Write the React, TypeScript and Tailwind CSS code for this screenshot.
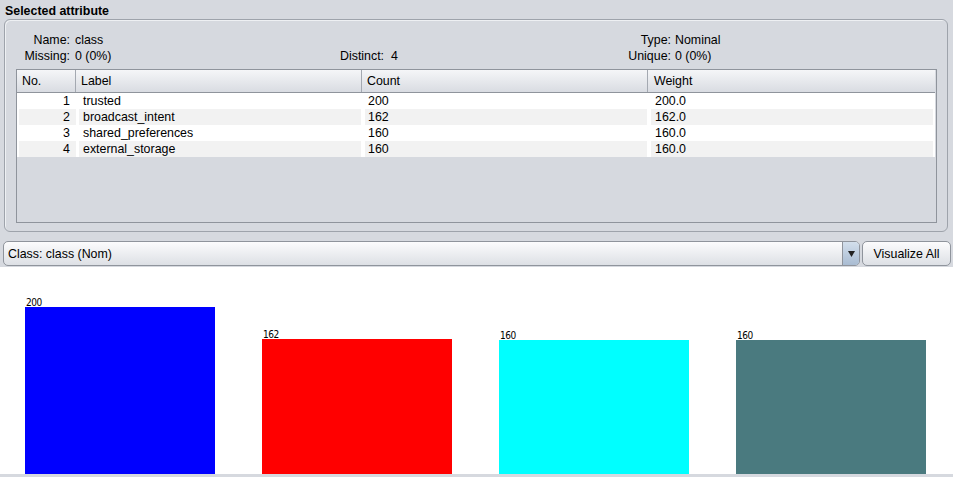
import React from "react";

const rows = [
  { no: 1, label: "trusted", count: "200", weight: "200.0" },
  { no: 2, label: "broadcast_intent", count: "162", weight: "162.0" },
  { no: 3, label: "shared_preferences", count: "160", weight: "160.0" },
  { no: 4, label: "external_storage", count: "160", weight: "160.0" },
];

const bars = [
  { value: 200, color: "bg-[#0000ff]" },
  { value: 162, color: "bg-[#ff0000]" },
  { value: 160, color: "bg-[#00ffff]" },
  { value: 160, color: "bg-[#4a7a7f]" },
];

export default function App() {
  return (
    <div className="w-[953px] h-[477px] overflow-hidden bg-[#d6d9df] text-[12.4px] leading-[16px] text-black font-['Liberation_Sans',Arial,sans-serif]">
      {/* titulo */}
      <div className="h-[19px] pl-[5px] pt-[4px] font-bold leading-[15px]">Selected attribute</div>

      {/* caja del atributo */}
      <div className="ml-[4px] w-[944px] h-[213px] rounded-[6px] border border-[#9ea3ab] shadow-[inset_1px_1px_0_#eef0f3]">
        <div className="pt-[12px]">
          <div className="flex h-[16px]">
            <div className="flex w-[335px]">
              <span className="w-[65px] text-right">Name:</span>
              <span className="pl-[5px]">class</span>
            </div>
            <div className="w-[255px]"></div>
            <div className="flex">
              <span className="w-[76px] text-right">Type:</span>
              <span className="pl-[4px]">Nominal</span>
            </div>
          </div>
          <div className="flex h-[16px]">
            <div className="flex w-[335px]">
              <span className="w-[65px] text-right">Missing:</span>
              <span className="pl-[5px]">0 (0%)</span>
            </div>
            <div className="w-[255px]">Distinct:&nbsp; 4</div>
            <div className="flex">
              <span className="w-[76px] text-right">Unique:</span>
              <span className="pl-[4px]">0 (0%)</span>
            </div>
          </div>
        </div>

        {/* tabla */}
        <div className="ml-[11px] mt-[5px] w-[921px] h-[154px] border border-[#8f949c] bg-[#d6d9df]">
          <div className="flex h-[23px] w-[918px] items-center bg-gradient-to-b from-[#f5f6f8] to-[#d9dce2] border-b border-[#8f949c]">
            <div className="w-[59px] h-full pl-[5px] flex items-center border-r border-[#a4a9b1]">No.</div>
            <div className="w-[286px] h-full pl-[5px] flex items-center border-r border-[#a4a9b1]">Label</div>
            <div className="w-[286px] h-full pl-[5px] flex items-center border-r border-[#a4a9b1]">Count</div>
            <div className="w-[287px] h-full pl-[6px] flex items-center">Weight</div>
          </div>
          {rows.map((r, i) => {
            const cell = i % 2 === 1 ? "bg-[#f2f2f2]" : "bg-white";
            return (
              <div key={r.no} className="flex h-[16px] w-[918px] bg-white leading-[15px]">
                <div className="w-[59px] pl-[2px]">
                  <div className={`h-full pt-[1px] pr-[6px] text-right ${cell}`}>{r.no}</div>
                </div>
                <div className="w-[286px] pl-[3px] pr-[1px]">
                  <div className={`h-full pt-[1px] pl-[4px] ${cell}`}>{r.label}</div>
                </div>
                <div className="w-[286px] pl-[3px] pr-[1px]">
                  <div className={`h-full pt-[1px] pl-[3px] ${cell}`}>{r.count}</div>
                </div>
                <div className="w-[287px] pl-[3px] pr-[2px]">
                  <div className={`h-full pt-[1px] pl-[4px] ${cell}`}>{r.weight}</div>
                </div>
              </div>
            );
          })}
        </div>
      </div>

      {/* combo de clase */}
      <div className="flex h-[25px] mt-[9px] pl-[3px]">
        <div className="flex w-[857px] h-[25px] rounded-[5px] border border-[#8f949c] overflow-hidden bg-gradient-to-b from-[#fcfcfd] to-[#dde0e5]">
          <div className="flex-1 pl-[4px] flex items-center">Class: class (Nom)</div>
          <div className="w-[17px] flex items-center justify-center border-l border-[#8f949c] bg-gradient-to-b from-[#d3dfec] to-[#a9bcd2]">
            <svg width="7" height="6" viewBox="0 0 7 6">
              <path d="M0 0 H7 L3.5 6 Z" fill="#222" />
            </svg>
          </div>
        </div>
        <div className="ml-[2px] w-[89px] h-[25px] rounded-[5px] border border-[#8f949c] bg-gradient-to-b from-[#fcfcfd] to-[#dde0e5] flex items-center justify-center">
          Visualize All
        </div>
      </div>

      {/* grafico */}
      <div className="mt-[1px] h-[207px] bg-white flex items-end pl-[25px] gap-[47px]">
        {bars.map((b, i) => (
          <div key={i} className="w-[190px] flex flex-col">
            <div className="text-[10px] leading-[10px] pl-[1px] mb-[-1px] font-['DejaVu_Sans_Condensed',sans-serif] tracking-[-0.5px]">{b.value}</div>
            <div className={`w-[190px] ${b.color}`} style={{ height: Math.round((b.value / 200) * 167) }}></div>
          </div>
        ))}
      </div>
    </div>
  );
}
